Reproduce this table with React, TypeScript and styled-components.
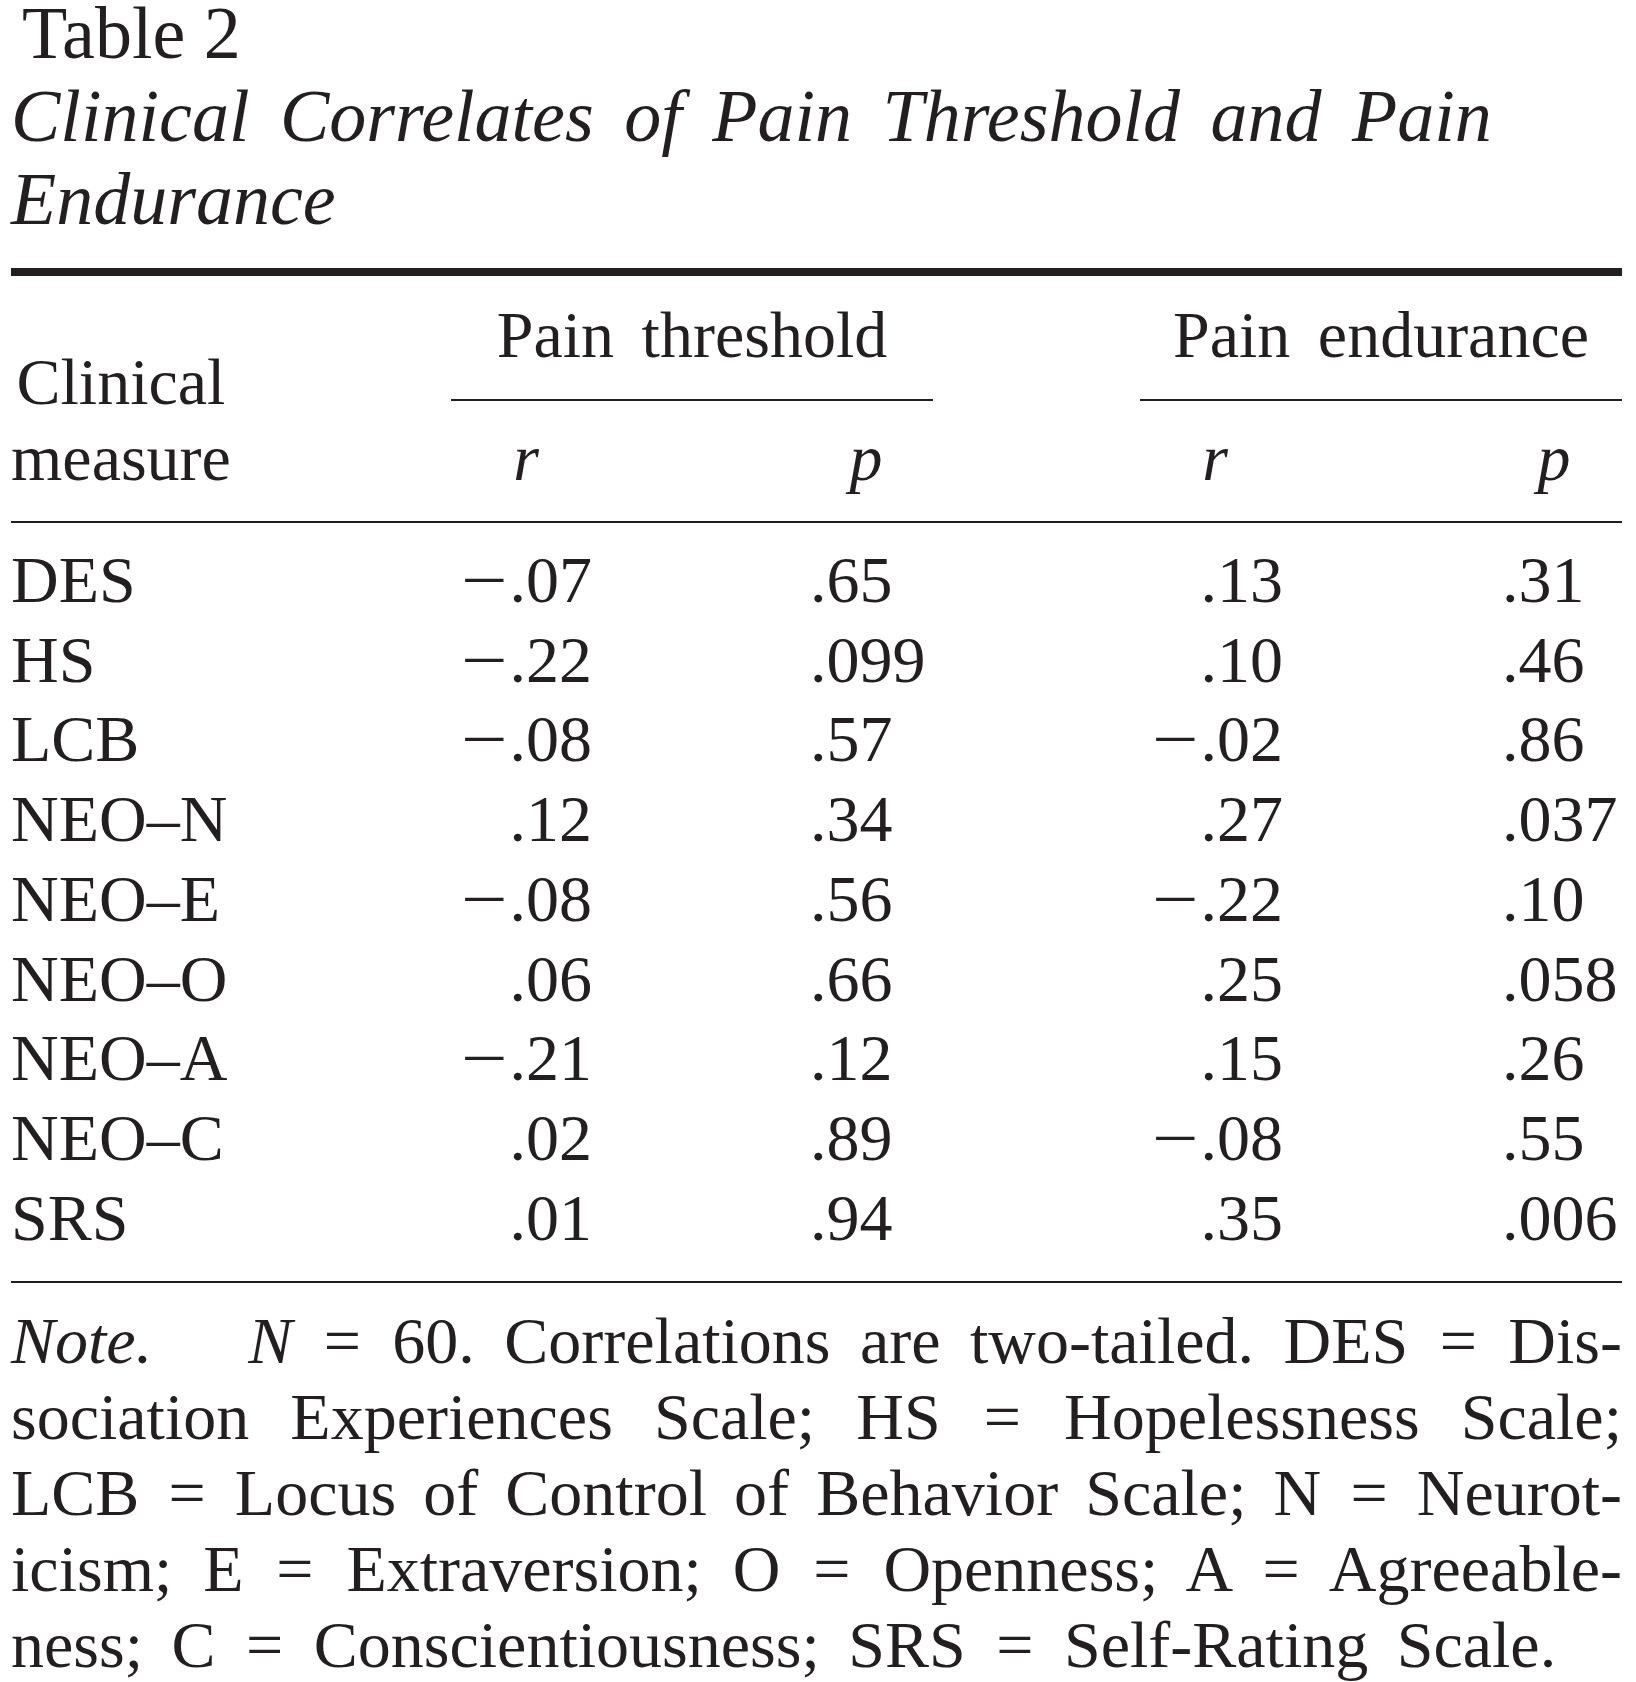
import React from "react";
import styled, { createGlobalStyle } from "styled-components";

const GlobalStyle = createGlobalStyle`
  html, body { margin: 0; padding: 0; background: #ffffff; }
`;

const INK = "#231f20";
const COLS = "440px 141px 218px 123px 207px 143px 219px 120px";

const Page = styled.div`
  width: 1611px;
  margin-left: 11px;
  color: ${INK};
  font-family: "Liberation Serif", "Times New Roman", serif;
`;

const Caption = styled.div`
  font-size: 74px;
`;

const TableNo = styled.div`
  padding-left: 11px;
  line-height: 67px;
`;

const TitleText = styled.div`
  margin-top: 8px;
  line-height: 83px;
  font-style: italic;
  word-spacing: 12px;
`;

const ThickRule = styled.div`
  height: 8px;
  margin-top: 27px;
  background: ${INK};
`;

const Head = styled.div`
  display: grid;
  grid-template-columns: ${COLS};
  padding-top: 21px;
  border-bottom: 2px solid ${INK};
  font-size: 66px;
  line-height: 76px;
`;

const Stub = styled.div`
  grid-column: 1;
  grid-row: 1 / 3;
  align-self: end;
  justify-self: start;
  text-align: center;
  padding-bottom: 25px;
`;

const Spanner = styled.div<{ $from: number; $to: number }>`
  grid-row: 1;
  grid-column: ${(p) => p.$from} / ${(p) => p.$to};
  text-align: center;
  word-spacing: 11px;
  padding-bottom: 26px;
  border-bottom: 2px solid ${INK};
`;

const SubHead = styled.div<{ $col: number; $shift: number }>`
  grid-row: 2;
  grid-column: ${(p) => p.$col};
  font-style: italic;
  text-align: center;
  padding-top: 19px;
  padding-bottom: 25px;
  padding-left: ${(p) => (p.$shift > 0 ? p.$shift : 0)}px;
  padding-right: ${(p) => (p.$shift < 0 ? -p.$shift : 0)}px;
`;

const Body = styled.div`
  padding-top: 17px;
  padding-bottom: 24px;
  border-bottom: 2px solid ${INK};
  font-size: 66px;
  line-height: 79.7px;
`;

const Row = styled.div`
  display: grid;
  grid-template-columns: ${COLS};
`;

const Cell = styled.div<{ $col: number; $align: "left" | "right" }>`
  grid-column: ${(p) => p.$col};
  text-align: ${(p) => p.$align};
  white-space: nowrap;
`;

const Minus = styled.span`
  display: inline-block;
  margin-right: 11px;
  transform: scaleX(1.25);
  transform-origin: left center;
`;

const Note = styled.div`
  padding-top: 20px;
  font-size: 66px;
  line-height: 76px;
`;

const NoteLine = styled.div<{ $last?: boolean }>`
  text-align: ${(p) => (p.$last ? "left" : "justify")};
  text-align-last: ${(p) => (p.$last ? "left" : "justify")};
  word-spacing: ${(p) => (p.$last ? "12px" : "normal")};
`;

const I = styled.span`
  font-style: italic;
`;

const NoteGap = styled.span`
  display: inline-block;
  width: 96px;
`;

const Eq = styled.span`
  margin: 0 2px;
`;

type Data = [string, string, string, string, string];

const rows: Data[] = [
  ["DES", "−.07", ".65", ".13", ".31"],
  ["HS", "−.22", ".099", ".10", ".46"],
  ["LCB", "−.08", ".57", "−.02", ".86"],
  ["NEO–N", ".12", ".34", ".27", ".037"],
  ["NEO–E", "−.08", ".56", "−.22", ".10"],
  ["NEO–O", ".06", ".66", ".25", ".058"],
  ["NEO–A", "−.21", ".12", ".15", ".26"],
  ["NEO–C", ".02", ".89", "−.08", ".55"],
  ["SRS", ".01", ".94", ".35", ".006"],
];

const Num: React.FC<{ v: string }> = ({ v }) =>
  v.startsWith("−") ? (
    <>
      <Minus>−</Minus>
      {v.slice(1)}
    </>
  ) : (
    <>{v}</>
  );

export default function App() {
  return (
    <>
      <GlobalStyle />
      <Page>
        <Caption>
          <TableNo>Table 2</TableNo>
          <TitleText>Clinical Correlates of Pain Threshold and Pain Endurance</TitleText>
        </Caption>
        <ThickRule />
        <Head>
          <Stub>
            Clinical
            <br />
            measure
          </Stub>
          <Spanner $from={2} $to={5}>Pain threshold</Spanner>
          <Spanner $from={6} $to={9}>Pain endurance</Spanner>
          <SubHead $col={2} $shift={9}>r</SubHead>
          <SubHead $col={4} $shift={-11}>p</SubHead>
          <SubHead $col={6} $shift={7}>r</SubHead>
          <SubHead $col={8} $shift={-16}>p</SubHead>
        </Head>
        <Body>
          {rows.map(([label, r1, p1, r2, p2]) => (
            <Row key={label}>
              <Cell $col={1} $align="left">{label}</Cell>
              <Cell $col={2} $align="right"><Num v={r1} /></Cell>
              <Cell $col={4} $align="left">{p1}</Cell>
              <Cell $col={6} $align="right"><Num v={r2} /></Cell>
              <Cell $col={8} $align="left">{p2}</Cell>
            </Row>
          ))}
        </Body>
        <Note>
          <NoteLine>
            <I>Note.</I>
            <NoteGap />
            <I>N</I> <Eq>=</Eq> 60. Correlations are two-tailed. DES <Eq>=</Eq> Dis-
          </NoteLine>
          <NoteLine>
            sociation Experiences Scale; HS <Eq>=</Eq> Hopelessness Scale;
          </NoteLine>
          <NoteLine>
            LCB <Eq>=</Eq> Locus of Control of Behavior Scale; N <Eq>=</Eq> Neurot-
          </NoteLine>
          <NoteLine>
            icism; E <Eq>=</Eq> Extraversion; O <Eq>=</Eq> Openness; A <Eq>=</Eq> Agreeable-
          </NoteLine>
          <NoteLine $last>
            ness; C <Eq>=</Eq> Conscientiousness; SRS <Eq>=</Eq> Self-Rating Scale.
          </NoteLine>
        </Note>
      </Page>
    </>
  );
}
